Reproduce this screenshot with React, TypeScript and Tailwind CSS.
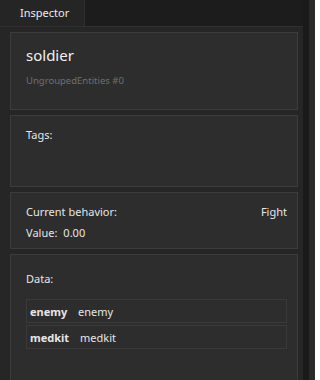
import React from "react";

export default function App() {
  return (
    <div className="w-[315px] h-[380px] bg-[#1c1c1c] flex overflow-hidden font-['Noto_Sans',sans-serif] text-[#e6e6e6]">
      <div className="flex-1 flex flex-col min-w-0">
        <div className="h-[26px] flex shrink-0">
          <div className="w-[85px] bg-[#252525] border-r border-[#2f2f2f] pl-[20px] flex items-center text-[11px] text-[#ececec]">
            Inspector
          </div>
        </div>
        <div className="flex-1 bg-[#262626] border-t border-[#303030] pl-[10px] pr-[5px] pt-[5px] flex flex-col gap-[5px]">
          <div className="h-[78px] shrink-0 bg-[#2d2d2d] border border-[#3c3c3c] pl-[15px] pt-[12px]">
            <div className="text-[15px] leading-[20px] text-[#f2f2f2]">soldier</div>
            <div className="mt-[9px] text-[9.5px] leading-[14px] text-[#6f6f6f]">UngroupedEntities #0</div>
          </div>
          <div className="h-[72px] shrink-0 bg-[#2d2d2d] border border-[#3c3c3c] pl-[15px] pt-[11px]">
            <div className="text-[11px] leading-[16px]">Tags:</div>
          </div>
          <div className="h-[57px] shrink-0 bg-[#2d2d2d] border border-[#3c3c3c] pl-[15px] pr-[10px] pt-[11px] text-[11px] leading-[16px]">
            <div className="flex justify-between">
              <span>Current behavior:</span>
              <span>Fight</span>
            </div>
            <div className="mt-[5px] flex gap-[6px]">
              <span>Value:</span>
              <span>0.00</span>
            </div>
          </div>
          <div className="flex-1 bg-[#2d2d2d] border border-[#3c3c3c] border-b-0 pl-[15px] pr-[10px] pt-[16px] text-[11px] leading-[16px]">
            <div>Data:</div>
            <div className="mt-[12px] flex flex-col gap-[2px]">
              <div className="h-[24px] border border-[#3a3a3a] flex items-center pl-[3px] pt-[1px]">
                <span className="font-bold w-[48px]">enemy</span>
                <span>enemy</span>
              </div>
              <div className="h-[24px] border border-[#3a3a3a] flex items-center pl-[3px] pt-[1px]">
                <span className="font-bold w-[50px]">medkit</span>
                <span>medkit</span>
              </div>
            </div>
          </div>
        </div>
      </div>
      <div className="w-[12px] flex shrink-0">
        <div className="w-[6px] bg-[#1a1a1a]" />
        <div className="w-[6px] bg-[#2a2a2a]" />
      </div>
    </div>
  );
}
